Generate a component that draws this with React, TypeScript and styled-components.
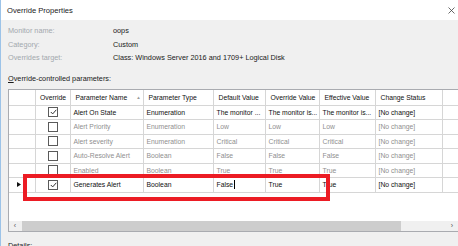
import React from "react";
import styled, { createGlobalStyle } from "styled-components";

const Global = createGlobalStyle`
  html, body { margin: 0; padding: 0; background: #f0f0f0; }
  body { font-family: "Liberation Sans", Arial, sans-serif; }
`;

const Window = styled.div`
  position: relative;
  width: 458px;
  height: 246px;
  overflow: hidden;
  display: flex;
  flex-direction: column;
  background: #f0f0f0;
  border-left: 1px solid #9cc3e8;
  box-sizing: border-box;
`;

const TitleBar = styled.div`
  height: 20px;
  flex: none;
  background: #ffffff;
  display: flex;
  align-items: center;
  justify-content: space-between;
  padding: 0 3px 0 6px;
  font-size: 7.6px;
  color: #1a1a1a;
`;

const Close = styled.svg`
  width: 7px;
  height: 7px;
`;

const Body = styled.div`
  flex: 1;
  display: flex;
  flex-direction: column;
  padding: 4px 0 0 7px;
  font-size: 7.3px;
  color: #1a1a1a;
`;

const Fields = styled.div`
  display: grid;
  grid-template-columns: 105px 1fr;
  grid-auto-rows: 13.5px;
  align-items: center;
`;

const FieldLabel = styled.div`
  color: #a3a8ae;
`;

const FieldValue = styled.div`
  color: #1a1a1a;
`;

const SectionLabel = styled.div`
  margin-top: 7px;
  height: 13px;
  display: flex;
  align-items: center;
  & u { text-decoration: underline; }
`;

const GridBox = styled.div`
  margin-top: 4px;
  height: 141px;
  flex: none;
  border: 1px solid #a9abb0;
  border-right: none;
  background: #ffffff;
  display: flex;
  flex-direction: column;
`;

const Rows = styled.div`
  flex: 1;
  display: flex;
  flex-direction: column;
`;

const Row = styled.div<{ $head?: boolean }>`
  display: grid;
  grid-template-columns: 27px 35px 73px 70px 52px 54px 56px 67px 1fr;
  height: ${(p) => (p.$head ? "16px" : "14.5px")};
  box-sizing: border-box;
  border-bottom: 1px solid #d6d6d6;
`;

const Cell = styled.div<{ $dim?: boolean; $head?: boolean; $center?: boolean }>`
  border-right: 1px solid #d6d6d6;
  display: flex;
  align-items: center;
  justify-content: ${(p) => (p.$center ? "center" : "flex-start")};
  padding-left: ${(p) => (p.$center ? "0" : p.$head ? "4.5px" : "2.5px")};
  font-size: 6.8px;
  color: ${(p) => (p.$dim ? "#8f8f8f" : "#111111")};
  white-space: nowrap;
  overflow: hidden;
  position: relative;
`;

const LastCell = styled.div``;

const SortArrow = styled.span`
  color: #9a9a9a;
  font-size: 4.5px;
  margin-left: 9px;
`;

const Box = styled.span`
  width: 8px;
  height: 8px;
  border: 1px solid #5a5a5a;
  background: #fff;
  display: inline-flex;
  align-items: center;
  justify-content: center;
`;

const Caret = styled.span`
  display: inline-block;
  width: 1px;
  height: 9px;
  background: #000;
  margin-left: 0.5px;
`;

const RowPointer = styled.svg`
  width: 4px;
  height: 5px;
  margin-left: 5px;
`;

const ScrollBar = styled.div`
  height: 10px;
  flex: none;
  display: flex;
  align-items: center;
  background: #f0f0f0;
`;

const ScrollBtn = styled.div`
  width: 12px;
  height: 10px;
  display: flex;
  align-items: center;
  justify-content: center;
  font-size: 7px;
  color: #555;
`;

const Thumb = styled.div`
  height: 10px;
  width: 379px;
  background: #cdcdcd;
  margin-left: 1px;
`;

const Track = styled.div`
  flex: 1;
`;

const Details = styled.div`
  margin-top: 9px;
  font-size: 7.3px;
`;

const RedBox = styled.div`
  position: absolute;
  left: 22px;
  top: 174px;
  width: 307px;
  height: 27px;
  box-sizing: border-box;
  border: 4px solid #ec1c24;
  pointer-events: none;
`;

const Check = () => (
  <svg width="7" height="6" viewBox="0 0 7 6">
    <path d="M0.8 3 L2.7 4.9 L6.3 0.8" fill="none" stroke="#333" strokeWidth="1" />
  </svg>
);

type R = {
  on: boolean;
  name: string;
  type: string;
  def: string;
  ov: string;
  eff: string;
  sel?: boolean;
};

const data: R[] = [
  { on: true, name: "Alert On State", type: "Enumeration", def: "The monitor ...", ov: "The monitor is...", eff: "The monitor is..." },
  { on: false, name: "Alert Priority", type: "Enumeration", def: "Low", ov: "Low", eff: "Low" },
  { on: false, name: "Alert severity", type: "Enumeration", def: "Critical", ov: "Critical", eff: "Critical" },
  { on: false, name: "Auto-Resolve Alert", type: "Boolean", def: "False", ov: "False", eff: "False" },
  { on: false, name: "Enabled", type: "Boolean", def: "True", ov: "True", eff: "True" },
  { on: true, name: "Generates Alert", type: "Boolean", def: "False", ov: "True", eff: "True", sel: true },
];

export default function App() {
  return (
    <Window>
      <Global />
      <TitleBar>
        <span>Override Properties</span>
        <Close viewBox="0 0 7 7">
          <path d="M0.5 0.5 L6.5 6.5 M6.5 0.5 L0.5 6.5" stroke="#444" strokeWidth="0.8" />
        </Close>
      </TitleBar>
      <Body>
        <Fields>
          <FieldLabel>Monitor name:</FieldLabel>
          <FieldValue>oops</FieldValue>
          <FieldLabel>Category:</FieldLabel>
          <FieldValue>Custom</FieldValue>
          <FieldLabel>Overrides target:</FieldLabel>
          <FieldValue>Class: Windows Server 2016 and 1709+ Logical Disk</FieldValue>
        </Fields>
        <SectionLabel>
          <span>
            <u>O</u>verride-controlled parameters:
          </span>
        </SectionLabel>
        <GridBox>
          <Rows>
            <Row $head>
              <Cell />
              <Cell $head $center>Override</Cell>
              <Cell $head>
                Parameter Name<SortArrow>▲</SortArrow>
              </Cell>
              <Cell $head>Parameter Type</Cell>
              <Cell $head>Default Value</Cell>
              <Cell $head>Override Value</Cell>
              <Cell $head>Effective Value</Cell>
              <Cell $head>Change Status</Cell>
              <LastCell />
            </Row>
            {data.map((r) => {
              const dim = !r.on;
              return (
                <Row key={r.name}>
                  <Cell>
                    {r.sel && (
                      <RowPointer viewBox="0 0 4 5">
                        <path d="M0 0 L4 2.5 L0 5 Z" fill="#111" />
                      </RowPointer>
                    )}
                  </Cell>
                  <Cell $center>
                    <Box>{r.on && <Check />}</Box>
                  </Cell>
                  <Cell $dim={dim}>{r.name}</Cell>
                  <Cell $dim={dim}>{r.type}</Cell>
                  <Cell $dim={dim}>
                    {r.def}
                    {r.sel && <Caret />}
                  </Cell>
                  <Cell $dim={dim}>{r.ov}</Cell>
                  <Cell $dim={dim}>{r.eff}</Cell>
                  <Cell $dim={dim}>[No change]</Cell>
                  <LastCell />
                </Row>
              );
            })}
          </Rows>
          <ScrollBar>
            <ScrollBtn>‹</ScrollBtn>
            <Thumb />
            <Track />
            <ScrollBtn>›</ScrollBtn>
          </ScrollBar>
        </GridBox>
        <Details>
          <u>D</u>etails:
        </Details>
      </Body>
      <RedBox />
    </Window>
  );
}
